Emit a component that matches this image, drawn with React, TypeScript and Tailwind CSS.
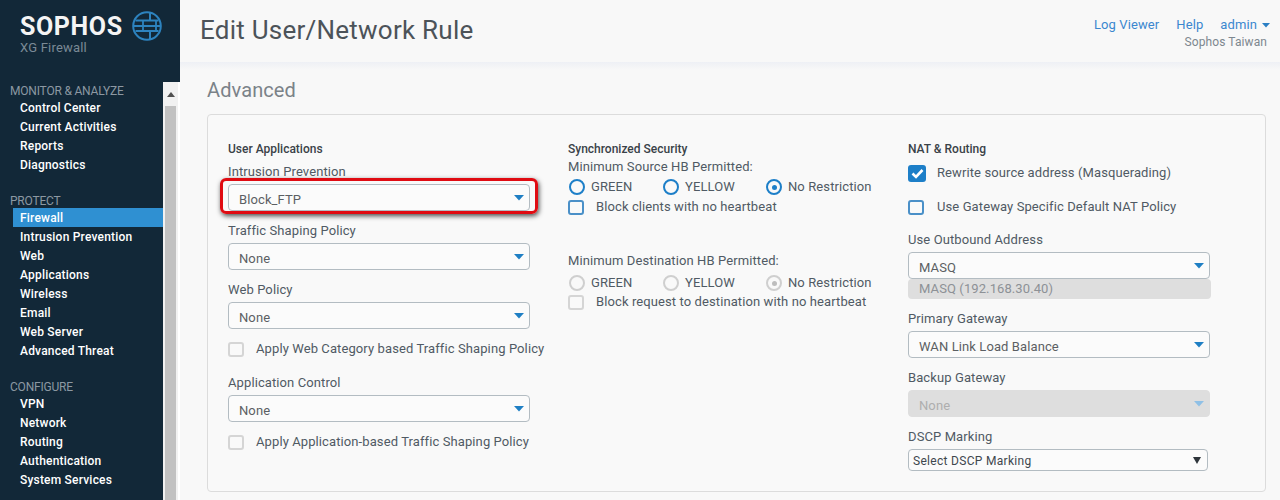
import React from "react";

const font = { fontFamily: "Roboto, 'Liberation Sans', sans-serif" };

function Caret({ muted = false }: { muted?: boolean }) {
  return (
    <svg width="10" height="6" viewBox="0 0 10 6" className="absolute right-[5px] top-[10px]">
      <path d="M0 0H10L5 5.500Z" fill={muted ? "#8fc0e6" : "#1f7fc4"} />
    </svg>
  );
}

function Select({ value, disabled = false }: { value: string; disabled?: boolean }) {
  return (
    <div
      className={
        "relative h-[27px] w-[302px] rounded-[4px] border pl-[10px] text-[13px] leading-[29px] tracking-[0.1px] " +
        (disabled
          ? "border-[#dedede] bg-[#dedede] text-[#aeaeae]"
          : "border-[#b3bcc2] bg-[#fbfbfb] text-[#5b5f63]")
      }
    >
      {value}
      <Caret muted={disabled} />
    </div>
  );
}

function Label({ children, className = "" }: { children: React.ReactNode; className?: string }) {
  return <div className={"h-[18px] text-[13px] leading-[18px] tracking-[0.1px] text-[#505a64] " + className}>{children}</div>;
}

function Heading({ children }: { children: React.ReactNode }) {
  return <div className="h-[18px] text-[12px] font-medium leading-[18px] text-[#3a4248]">{children}</div>;
}

function Box({ state = "off" }: { state?: "off" | "on" | "disabled" }) {
  if (state === "on") {
    return (
      <div className="flex h-[17px] w-[18px] shrink-0 items-center justify-center rounded-[3px] bg-[#1d7fc8]">
        <svg width="13" height="11" viewBox="0 0 13 11">
          <path d="M1.500 5.500L5 9L11.500 2" fill="none" stroke="#fff" strokeWidth="2.600" />
        </svg>
      </div>
    );
  }
  return (
    <div
      className={
        "h-[15px] w-[16px] shrink-0 rounded-[3px] border-2 " +
        (state === "disabled" ? "border-[#d5d5d5]" : "border-[#4a90c8]")
      }
    />
  );
}

function Check({ label, state = "off", className = "", wide = false }: { label: string; state?: "off" | "on" | "disabled"; className?: string; wide?: boolean }) {
  return (
    <div className={"flex h-[18px] items-center text-[13px] tracking-[0.1px] text-[#505a64] " + className}>
      <div className={"flex items-center " + (wide ? "w-[29px]" : "w-[28px]")}>
        <Box state={state} />
      </div>
      {label}
    </div>
  );
}

function Radio({ label, on = false, disabled = false, w }: { label: string; on?: boolean; disabled?: boolean; w: string }) {
  return (
    <div className={"flex items-center text-[13px] tracking-[0.1px] text-[#505a64] " + w}>
      <div
        className={
          "mr-[6px] ml-[1px] flex h-[16px] w-[16px] shrink-0 items-center justify-center rounded-full border-[2.500px] " +
          (disabled ? "border-[#cfcfcf]" : "border-[#1d7fc8]")
        }
      >
        {on && <div className={"h-[5px] w-[5px] rounded-full " + (disabled ? "bg-[#bdbdbd]" : "bg-[#1d7fc8]")} />}
      </div>
      {label}
    </div>
  );
}

function Radios({ disabled = false, className = "" }: { disabled?: boolean; className?: string }) {
  return (
    <div className={"flex h-[18px] items-center " + className}>
      <Radio label="GREEN" disabled={disabled} w="w-[94px]" />
      <Radio label="YELLOW" disabled={disabled} w="w-[103px]" />
      <Radio label="No Restriction" on disabled={disabled} w="w-[120px]" />
    </div>
  );
}

function NavGroup({ title, items, active, className = "" }: { title: string; items: string[]; active?: string; className?: string }) {
  return (
    <div className={className}>
      <div className="h-[16px] pl-[10px] text-[12px] leading-[18px] tracking-[-0.2px] text-[#8c98a2]">{title}</div>
      {items.map((it) => (
        <div
          key={it}
          className={
            "ml-[13px] h-[19px] pl-[7px] text-[12px] font-medium leading-[21px] tracking-[0.2px] text-white " +
            (it === active ? "bg-[#2f90d2]" : "")
          }
        >
          {it}
        </div>
      ))}
    </div>
  );
}

export default function App() {
  return (
    <div style={font} className="flex h-[500px] w-[1280px] overflow-hidden bg-[#f8f8f8]">
      <aside className="flex h-full w-[180px] shrink-0 flex-col bg-[#122838]">
        <div className="h-[82px] shrink-0 pl-[20px] pt-[10px]">
          <div className="flex items-center">
            <div className="mt-[2px] w-[112px] text-[25px] font-bold leading-[30px] tracking-[0.6px] text-[#f4f4f4]">SOPHOS</div>
            <svg width="30" height="30" viewBox="0 0 30 30">
              <g fill="none" stroke="#2d83bf" strokeWidth="2">
                <circle cx="15" cy="15" r="13.800" />
                <path d="M3.500 9.500H26.500M3.500 20H26.500M1.500 15H11M24 15H28.500M11 9.500V20M24 9.500V20M11 15H24" strokeWidth="1.800" />
                <path d="M18 2V9.500M18 20V28" />
              </g>
            </svg>
          </div>
          <div className="-mt-[1px] text-[13px] leading-[14px] tracking-[0.2px] text-[#7b8a96]">XG Firewall</div>
        </div>
        <div className="flex min-h-0 flex-1">
          <nav className="w-[163px] shrink-0">
            <NavGroup title="MONITOR & ANALYZE" items={["Control Center", "Current Activities", "Reports", "Diagnostics"]} />
            <NavGroup className="mt-[18px]" title="PROTECT" active="Firewall" items={["Firewall", "Intrusion Prevention", "Web", "Applications", "Wireless", "Email", "Web Server", "Advanced Threat"]} />
            <NavGroup className="mt-[18px]" title="CONFIGURE" items={["VPN", "Network", "Routing", "Authentication", "System Services"]} />
          </nav>
          <div className="flex w-[15px] flex-col bg-[#f1f1f1]">
            <div className="flex h-[24px] items-center justify-center">
              <svg width="8" height="5" viewBox="0 0 8 5"><path d="M0 5H8L4 0Z" fill="#505050" /></svg>
            </div>
            <div className="mx-[2px] flex-1 bg-[#c1c1c1]" />
          </div>
          <div className="w-[2px] bg-white" />
        </div>
      </aside>
      <main className="min-w-0 flex-1">
        <header className="flex h-[62px] justify-between bg-[#f8f8f8] pl-[20px] pr-[10px]">
          <h1 className="pt-[12px] text-[26px] leading-[36px] tracking-[0.24px] text-[#4c5359]">Edit User/Network Rule</h1>
          <div className="pt-[16px] text-[13px] leading-[18px] tracking-[0.1px]">
            <div className="flex text-[#3b87cf]">
              <span>Log Viewer</span>
              <span className="ml-[17px]">Help</span>
              <span className="ml-[17px] flex items-center">
                admin
                <svg width="8" height="5" viewBox="0 0 8 5" className="ml-[5px]"><path d="M0 0H8L4 4.500Z" fill="#2a7fc4" /></svg>
              </span>
            </div>
            <div className="mt-[-1px] pr-[3px] text-right text-[12px] tracking-[0.1px] text-[#7d878f]">Sophos Taiwan</div>
          </div>
        </header>
        <div className="h-[8px] bg-gradient-to-b from-[#eef0f5] to-[#f8f8f8]" />
        <div className="pl-[27px] pr-[14px]">
          <div className="pt-[8px] text-[20px] leading-[24px] tracking-[0.1px] text-[#7b8288]">Advanced</div>
          <section className="mt-[12px] grid h-[378px] w-[1059px] grid-cols-[340px_340px_1fr] rounded-[4px] border border-[#dcdcdc] bg-[#f9f9f9] pl-[20px] pt-[25px]">
            <div>
              <Heading>User Applications</Heading>
              <Label className="mt-[5px]">Intrusion Prevention</Label>
              <div className="relative mt-[3px]">
                <Select value="Block_FTP" />
                <div className="pointer-events-none absolute left-[-8px] top-[-6px] h-[36px] w-[318px] rounded-[6px] border-[3px] border-[#e00b12] shadow-[1px_2px_5px_rgba(0,0,0,0.7)]" />
              </div>
              <Label className="mt-[11px]">Traffic Shaping Policy</Label>
              <div className="mt-[3px]"><Select value="None" /></div>
              <Label className="mt-[11px]">Web Policy</Label>
              <div className="mt-[3px]"><Select value="None" /></div>
              <Check className="mt-[11px]" label="Apply Web Category based Traffic Shaping Policy" state="disabled" />
              <Label className="mt-[16px]">Application Control</Label>
              <div className="mt-[3px]"><Select value="None" /></div>
              <Check className="mt-[11px]" label="Apply Application-based Traffic Shaping Policy" state="disabled" />
            </div>
            <div>
              <Heading>Synchronized Security</Heading>
              <Label>Minimum Source HB Permitted:</Label>
              <Radios className="mt-[2px]" />
              <Check className="mt-[2px]" label="Block clients with no heartbeat" />
              <Label className="mt-[36px]">Minimum Destination HB Permitted:</Label>
              <Radios disabled className="mt-[4px]" />
              <Check className="mt-[1px]" label="Block request to destination with no heartbeat" state="disabled" />
            </div>
            <div>
              <Heading>NAT &amp; Routing</Heading>
              <Check wide className="mt-[6px]" label="Rewrite source address (Masquerading)" state="on" />
              <Check wide className="mt-[16px]" label="Use Gateway Specific Default NAT Policy" />
              <Label className="mt-[15px]">Use Outbound Address</Label>
              <div className="mt-[3px]"><Select value="MASQ" /></div>
              <div className="h-[20px] w-[303px] rounded-[4px] bg-[#dedede] pl-[11px] text-[13px] leading-[20px] tracking-[0.1px] text-[#8d9196]">MASQ (192.168.30.40)</div>
              <Label className="mt-[11px]">Primary Gateway</Label>
              <div className="mt-[3px]"><Select value="WAN Link Load Balance" /></div>
              <Label className="mt-[11px]">Backup Gateway</Label>
              <div className="mt-[3px]"><Select value="None" disabled /></div>
              <Label className="mt-[11px]">DSCP Marking</Label>
              <div className="relative mt-[3px] h-[22px] w-[300px] rounded-[4px] border border-[#b3bcc2] bg-[#fbfbfb] pl-[4px] text-[12px] leading-[22px] tracking-[0.3px] text-[#3f474e]">
                Select DSCP Marking
                <svg width="8" height="7" viewBox="0 0 8 7" className="absolute right-[6px] top-[7px]"><path d="M0 0H8L4 7Z" fill="#2e353b" /></svg>
              </div>
            </div>
          </section>
        </div>
      </main>
    </div>
  );
}
